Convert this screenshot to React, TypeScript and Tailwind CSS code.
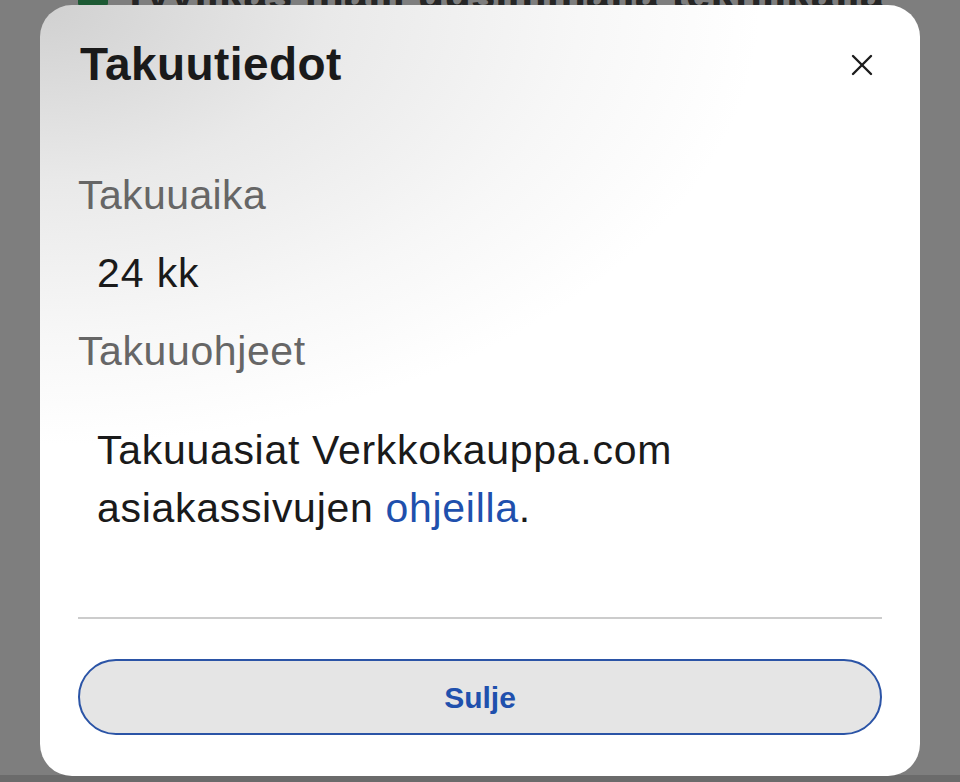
import React from 'react';

const font = { fontFamily: '"Liberation Sans", Arial, "Noto Sans", sans-serif' };

// taustalla näkyvä sivu (himmennetty)
const BackgroundPage = () => (
  <div className="flex items-end gap-[14px] pl-[78px] -mt-[36px] h-[42px]">
    <div className="w-[30px] h-[30px] bg-[#1d5a34] rounded-[3px]" />
    <span className="text-[44px] leading-none font-bold text-[#262626] whitespace-nowrap translate-y-[10px]">
      Tyylikäs malli uusimmalla tekniikalla
    </span>
  </div>
);

const CloseIcon = () => (
  <svg width="24" height="24" viewBox="0 0 24 24" fill="none" stroke="#1c1c1c" strokeWidth="2.4" strokeLinecap="round">
    <line x1="3" y1="3" x2="21" y2="21" />
    <line x1="21" y1="3" x2="3" y2="21" />
  </svg>
);

export default function App() {
  return (
    <div className="relative w-[960px] h-[782px] overflow-hidden bg-[#7e7e7e]" style={font}>
      <BackgroundPage />
      <div className="absolute left-0 right-0 bottom-0 h-[7px] bg-[#6b6b6b]" />

      {/* modaali */}
      <div className="absolute left-[40px] top-[5px] w-[880px] h-[771px] rounded-[32px] bg-[radial-gradient(ellipse_720px_440px_at_0%_0%,#d0d0d0_0%,#e9e9e9_40%,#f7f7f7_75%,#ffffff_100%)] px-[38px] pt-[32px] flex flex-col">
        <div className="flex items-center justify-between">
          <h2 className="text-[46px] leading-[55px] font-bold tracking-[0.4px] text-[#1a1a1a] pl-[2px]">Takuutiedot</h2>
          <button className="mr-[8px] w-[24px] h-[24px] flex items-center justify-center">
            <CloseIcon />
          </button>
        </div>

        <p className="mt-[79px] text-[41px] leading-[49px] tracking-[0.4px] text-[#666666]">Takuuaika</p>
        <p className="mt-[29px] pl-[19px] text-[41px] leading-[49px] tracking-[0.9px] text-[#1a1a1a]">24 kk</p>
        <p className="mt-[29px] text-[41px] leading-[49px] tracking-[0.6px] text-[#666666]">Takuuohjeet</p>
        <p className="mt-[45px] pl-[19px] text-[41px] leading-[58px] tracking-[0.7px] text-[#1a1a1a]">
          Takuuasiat Verkkokauppa.com
          <br />
          asiakassivujen <a className="text-[#1f50ad]">ohjeilla</a>.
        </p>

        <div className="mt-[80px] h-[2px] bg-[#cccccc]" />

        <button className="mt-[40px] h-[76px] w-full rounded-full border-[2.5px] border-[#2b54a6] bg-[#e5e5e5] text-[30px] font-bold text-[#1f50ad]">
          Sulje
        </button>
      </div>
    </div>
  );
}
